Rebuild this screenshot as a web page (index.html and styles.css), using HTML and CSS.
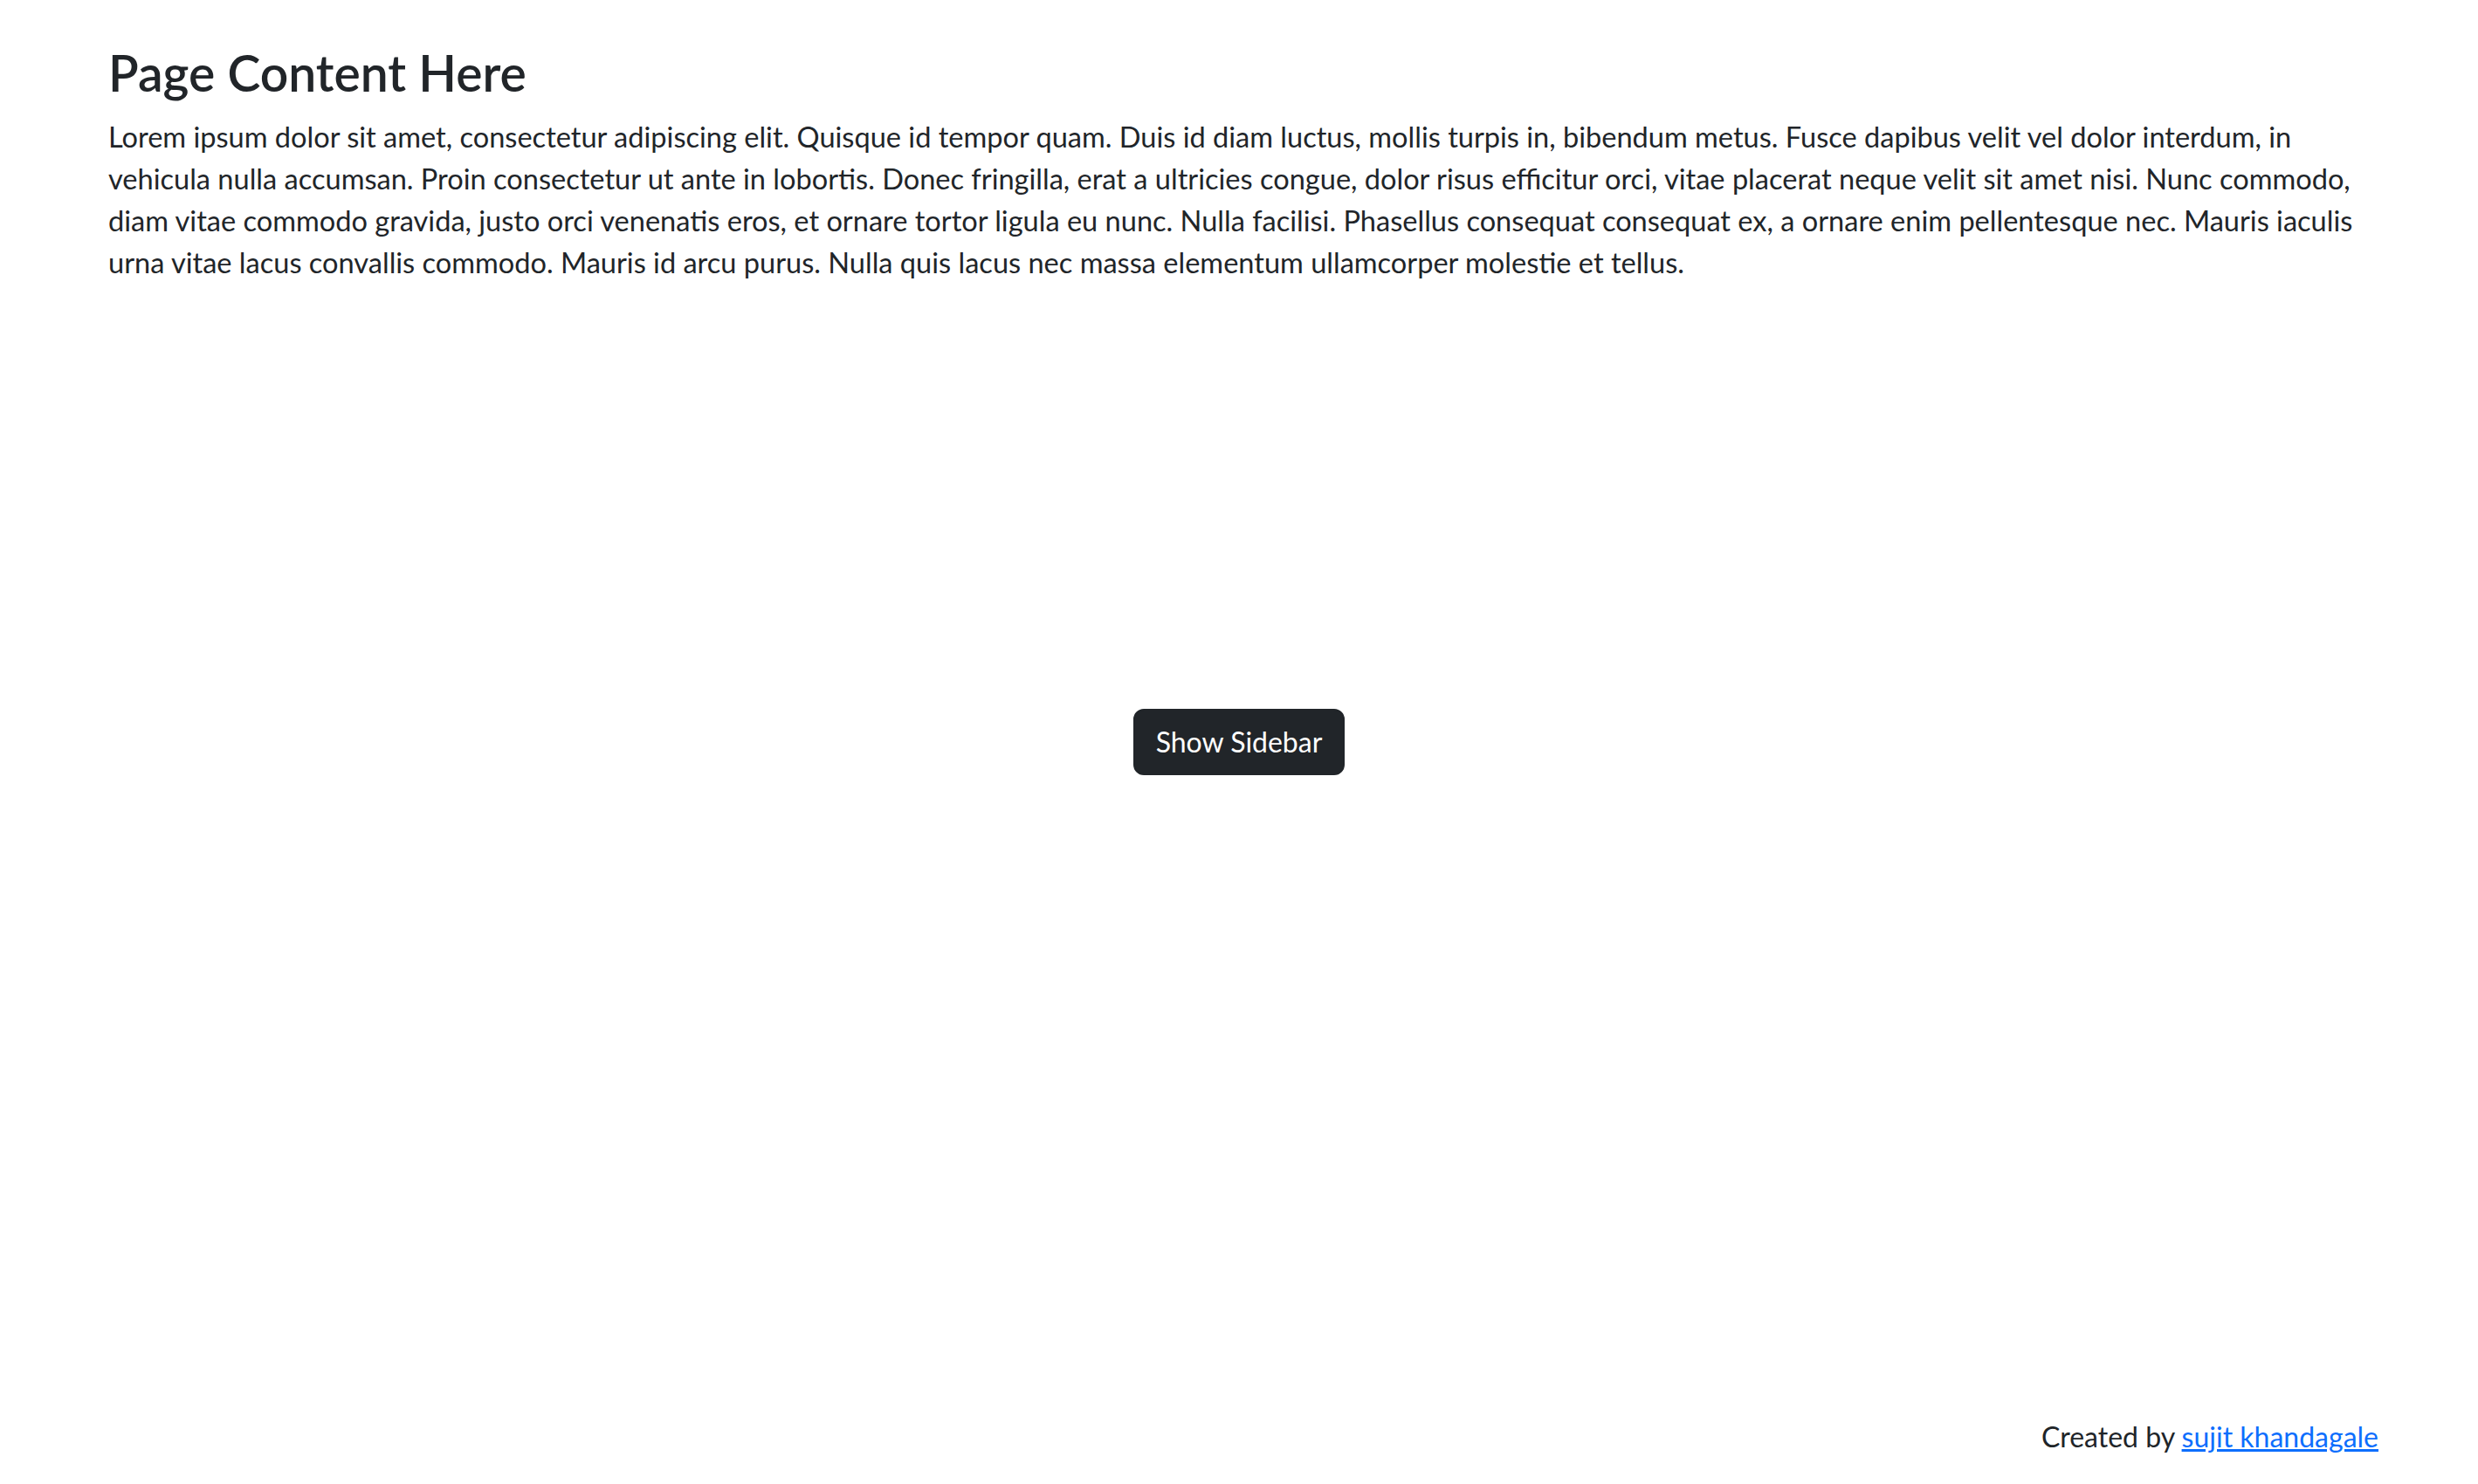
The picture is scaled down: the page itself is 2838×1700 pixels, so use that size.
FILE: index.html
```html
<!DOCTYPE html>
<html lang="en">
<head>
<meta charset="utf-8">
<title>Sidebar Demo</title>
<link rel="stylesheet" href="styles.css">
</head>
<body>
<div class="page">
  <main class="content">
    <h2 class="title">Page Content Here</h2>
    <p class="text">Lorem ipsum dolor sit amet, consectetur adipiscing elit. Quisque id tempor quam. Duis id diam luctus, mollis turpis in, bibendum metus. Fusce dapibus velit vel dolor interdum, in vehicula nulla accumsan. Proin consectetur ut ante in lobortis. Donec fringilla, erat a ultricies congue, dolor risus efficitur orci, vitae placerat neque velit sit amet nisi. Nunc commodo, diam vitae commodo gravida, justo orci venenatis eros, et ornare tortor ligula eu nunc. Nulla facilisi. Phasellus consequat consequat ex, a ornare enim pellentesque nec. Mauris iaculis urna vitae lacus convallis commodo. Mauris id arcu purus. Nulla quis lacus nec massa elementum ullamcorper molestie et tellus.</p>
  </main>
  <div class="center">
    <button class="btn" type="button">Show Sidebar</button>
  </div>
  <footer class="footer">Created by <a href="#" class="footer-link">sujit khandagale</a></footer>
</div>
</body>
</html>
```

FILE: styles.css
```css
* { box-sizing: border-box; }
html, body { margin: 0; padding: 0; }
body {
  font-family: Lato, "Open Sans", "Noto Sans", sans-serif;
  font-size: 32px;
  line-height: 1.5;
  color: #212529;
  background: #fff;
}
.page {
  display: grid;
  height: 100vh;
  grid-template-columns: 1fr;
  grid-template-rows: 1fr;
}
.page > * { grid-area: 1 / 1; }
.content {
  align-self: start;
  padding: 49px 95px 0 124px;
}
.title {
  margin: 0 0 16px;
  font-size: 57px;
  font-weight: 600;
  line-height: 1.2;
}
.text {
  margin: 0;
  font-size: 32.55px;
  line-height: 48px;
}
.center {
  align-self: center;
  justify-self: center;
}
.btn {
  font-family: inherit;
  font-size: 32px;
  line-height: 48px;
  color: #fff;
  background: #212529;
  border: 2px solid #212529;
  border-radius: 12px;
  padding: 12px 24px;
  cursor: pointer;
}
.footer {
  align-self: end;
  justify-self: end;
  margin: 0 114px 30px 0;
}
.footer-link {
  color: #0d6efd;
}
```
